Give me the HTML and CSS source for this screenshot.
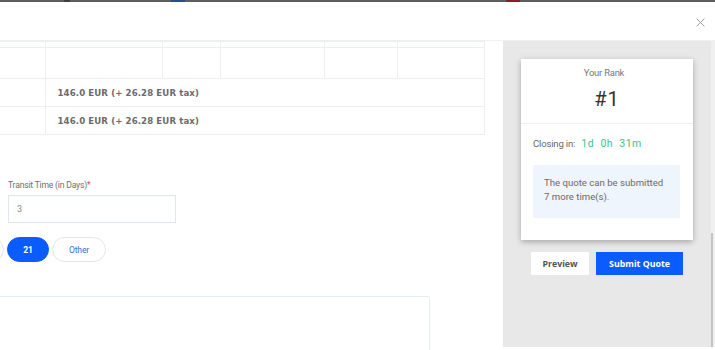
FILE: index.html
```html
<!DOCTYPE html>
<html>
<head>
    <meta charset="utf-8">
    <meta name="viewport" content="width=device-width, initial-scale=1.0">
    <title>Submit Quote</title>
    <link rel="stylesheet" href="styles.css">
</head>
<body>
    <div class="backdrop-strip"></div>
    <div class="modal-head">
        <svg class="close-btn" viewBox="0 0 10 10" fill="none" stroke="currentColor" stroke-width="1.1" stroke-linecap="round">
            <line x1="1" y1="1" x2="9" y2="9"></line>
            <line x1="9" y1="1" x2="1" y2="9"></line>
        </svg>
    </div>
    <div class="modal-body">
        <div class="main">
            <table class="rates">
                <colgroup>
                    <col style="width:45px">
                    <col style="width:117px">
                    <col style="width:58px">
                    <col style="width:104px">
                    <col style="width:73px">
                    <col style="width:87px">
                </colgroup>
                <tr class="row-stub"><td></td><td></td><td></td><td></td><td></td><td></td></tr>
                <tr class="row-empty"><td></td><td></td><td></td><td></td><td></td><td></td></tr>
                <tr class="row-total"><td></td><td colspan="5">146.0 EUR (+ 26.28 EUR tax)</td></tr>
                <tr class="row-total"><td></td><td colspan="5">146.0 EUR (+ 26.28 EUR tax)</td></tr>
            </table>

            <div class="field">
                <label class="field-label">Transit Time (in Days)<span class="req">*</span></label>
                <input class="field-input" type="text" value="3">
            </div>

            <div class="pills">
                <span class="pill pill-cut"></span>
                <span class="pill pill-active">21</span>
                <span class="pill">Other</span>
            </div>

            <div class="notes"></div>
        </div>

        <div class="side">
            <div class="rank-card">
                <div class="rank-top">
                    <div class="rank-label">Your Rank</div>
                    <div class="rank-value">#1</div>
                </div>
                <div class="rank-bottom">
                    <div class="closing">Closing in: <span class="timer">1d&nbsp; 0h&nbsp; 31m</span></div>
                    <div class="info-box">The quote can be submitted<br>7 more time(s).</div>
                </div>
            </div>
            <div class="actions">
                <button class="btn btn-light">Preview</button>
                <button class="btn btn-primary">Submit Quote</button>
            </div>
        </div>

        <div class="scroll-track">
            <div class="scroll-thumb"></div>
        </div>
    </div>
</body>
</html>
```
FILE: styles.css
```css
body {
    margin: 0;
    width: 715px;
    height: 350px;
    overflow: hidden;
    background: #fff;
    font-family: Roboto, "Liberation Sans", sans-serif;
    color: #666;
}
.backdrop-strip {
    height: 2px;
    background: linear-gradient(to right,
        #5d5d5d 0, #5d5d5d 64px, #3f3f3f 64px, #3f3f3f 70px,
        #5d5d5d 70px, #5d5d5d 171px, #2b4c8c 171px, #2b4c8c 185px,
        #5d5d5d 185px, #5d5d5d 506px, #8c1c2c 506px, #8c1c2c 520px,
        #5d5d5d 520px);
}
.modal-head {
    height: 38px;
    border-bottom: 1px solid #eef0f2;
    display: flex;
    justify-content: flex-end;
    align-items: center;
    padding-right: 10px;
}
.close-btn {
    width: 9px;
    height: 9px;
    color: #9a9a9a;
    margin-top: 2px;
}
.modal-body {
    display: flex;
    align-items: flex-start;
}
.main {
    width: 503px;
    height: 309px;
    overflow: hidden;
}
.rates {
    border-collapse: collapse;
    table-layout: fixed;
    width: 485px;
}
.rates td {
    border: 1px solid #eceef0;
    padding: 0;
}
.rates tr td:first-child {
    border-left: none;
}
.row-stub td {
    height: 5px;
}
.row-empty td {
    height: 30px;
}
.row-total td {
    height: 27px;
    font-family: "DejaVu Sans", "Open Sans", sans-serif;
    font-weight: 700;
    font-size: 8.6px;
    letter-spacing: 0.1px;
    color: #6b6b6b;
    padding-left: 12px;
}
.row-total td:first-child {
    padding-left: 0;
}
.field {
    margin: 45px 0 0 8px;
}
.field-label {
    display: block;
    font-size: 8.6px;
    color: #6f6f6f;
    letter-spacing: -0.2px;
    margin-bottom: 5px;
}
.req {
    color: #e5484d;
}
.field-input {
    box-sizing: border-box;
    width: 168px;
    height: 28px;
    border: 1px solid #dfe6ef;
    padding: 0 8px;
    font-family: Roboto, sans-serif;
    font-size: 9px;
    color: #888;
    outline: none;
}
.pills {
    display: flex;
    gap: 3px;
    margin: 14px 0 0 -50px;
}
.pill {
    box-sizing: border-box;
    height: 25px;
    border-radius: 13px;
    border: 1px solid #e6e6e6;
    background: #fff;
    width: 54px;
    display: flex;
    align-items: center;
    justify-content: center;
    font-size: 8.6px;
    color: #3b6fe0;
    letter-spacing: -0.2px;
}
.pill-cut {
    width: 54px;
}
.pill-active {
    width: 42px;
    background: #0a5cff;
    border-color: #0a5cff;
    color: #fff;
    font-weight: 700;
}
.notes {
    margin: 34px 0 0 -10px;
    width: 438px;
    height: 80px;
    border: 1px solid #e6ecf3;
    border-radius: 2px;
}
.side {
    width: 208px;
    height: 306px;
    background: #e8e8e8;
    box-sizing: border-box;
    padding: 18px 18px 0;
}
.rank-card {
    background: #fff;
    box-shadow: 0 2px 6px rgba(0, 0, 0, 0.28);
}
.rank-top {
    text-align: center;
    padding: 8px 0 12px;
    border-bottom: 1px solid #efefef;
}
.rank-label {
    font-size: 9.4px;
    color: #777;
    letter-spacing: -0.2px;
    margin-right: 6px;
}
.rank-value {
    font-size: 20px;
    color: #333;
    margin-top: 9px;
    letter-spacing: 1px;
}
.rank-bottom {
    padding: 13px 13px 22px 12px;
}
.closing {
    font-size: 9.6px;
    color: #6a6a6a;
    letter-spacing: -0.2px;
}
.timer {
    font-size: 10.5px;
    color: #3cc48c;
    letter-spacing: 0.5px;
    margin-left: 4px;
}
.info-box {
    margin-top: 15px;
    background: #eff5fc;
    padding: 11px 11px 14px;
    font-size: 9.6px;
    line-height: 14px;
    color: #6a6a6a;
}
.actions {
    display: flex;
    justify-content: center;
    gap: 7px;
    margin-top: 12px;
}
.btn {
    height: 23px;
    border: none;
    font-family: "Open Sans", "DejaVu Sans", sans-serif;
    font-weight: 700;
    font-size: 8.8px;
    padding: 0;
}
.btn-light {
    width: 58px;
    background: #fff;
    color: #555;
}
.btn-primary {
    width: 87px;
    background: #0a5cff;
    color: #fff;
}
.scroll-track {
    width: 4px;
    height: 306px;
    background: #f0f0f0;
}
.scroll-thumb {
    width: 2px;
    height: 114px;
    margin-top: 192px;
    background: #c4c4c4;
}
```
